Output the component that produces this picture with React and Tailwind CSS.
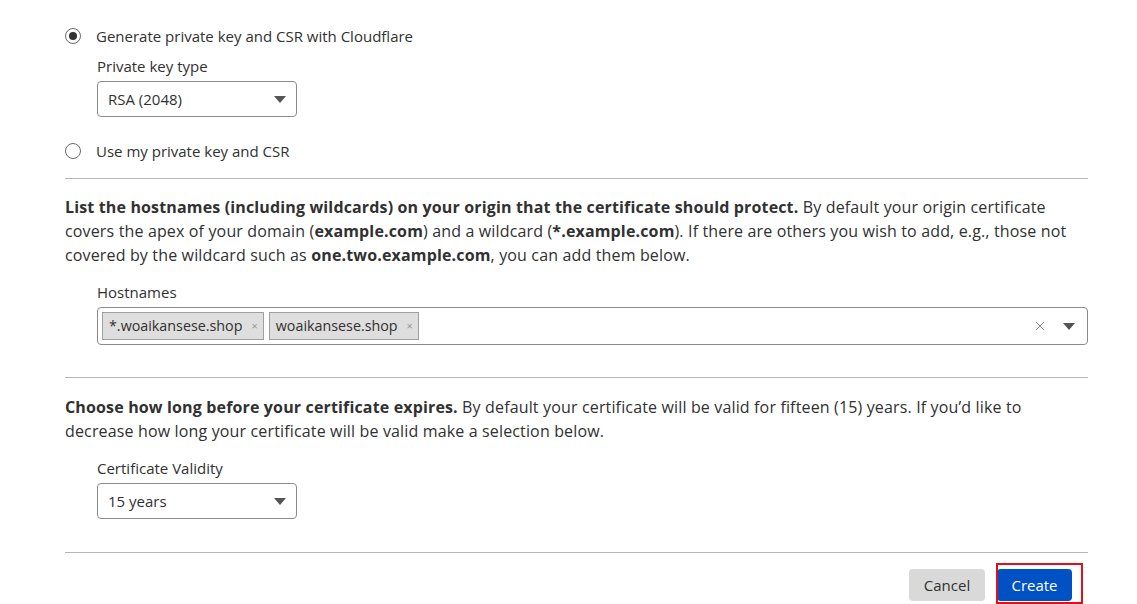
import React from 'react';

const font = { fontFamily: '"Open Sans", "Noto Sans", Arial, sans-serif' };

function Radio({ checked, label }) {
  return (
    <label className="flex items-center gap-[15px] text-[15px] leading-[20px] text-[#313131]">
      <span className="w-[16px] h-[16px] rounded-full border border-[#6b6b6b] bg-white flex items-center justify-center">
        {checked && <span className="w-[8px] h-[8px] rounded-full bg-[#313131]" />}
      </span>
      {label}
    </label>
  );
}

function Select({ value }) {
  return (
    <div className="w-[200px] h-[36px] border border-[#8a8a8a] rounded-[4px] flex items-center justify-between pl-[10px] pr-[10px] text-[15px] text-[#313131]">
      <span>{value}</span>
      <svg width="12" height="7" viewBox="0 0 12 7"><path d="M0 0h12L6 7z" fill="#555" /></svg>
    </div>
  );
}

function Tag({ text }) {
  return (
    <span className="h-[28px] flex items-center gap-[9px] bg-[#dedede] border border-[#a0a0a0] pl-[6px] pr-[5px] text-[14.3px] text-[#313131]">
      {text}
      <span className="text-[11px] text-[#999]">×</span>
    </span>
  );
}

export default function App() {
  return (
    <div style={font} className="bg-white w-[1137px] h-[604px] overflow-hidden pl-[65px] pr-[49px] pt-[26px] text-[#313131]">
      {/* Private key section */}
      <Radio checked label="Generate private key and CSR with Cloudflare" />
      <div className="pl-[32px] mt-[10px]">
        <div className="text-[15px] leading-[20px]">Private key type</div>
        <div className="mt-[5px]"><Select value="RSA (2048)" /></div>
      </div>
      <div className="mt-[24px]"><Radio label="Use my private key and CSR" /></div>

      <div className="border-t border-[#b6b6b6] mt-[17px]" />

      {/* Hostnames */}
      <p className="mt-[16px] text-[16px] leading-[24px] tracking-[0.15px]">
        <b>List the hostnames (including wildcards) on your origin that the certificate should protect.</b> By default your origin certificate covers the apex of your domain (<b>example.com</b>) and a wildcard (<b>*.example.com</b>). If there are others you wish to add, e.g., those not covered by the wildcard such as <b>one.two.example.com</b>, you can add them below.
      </p>
      <div className="pl-[32px] mt-[15px]">
        <div className="text-[15px] leading-[20px]">Hostnames</div>
        <div className="mt-[5px] h-[38px] border border-[#8a8a8a] rounded-[4px] flex items-center pl-[4px] pr-[12px] gap-[5px]">
          <Tag text="*.woaikansese.shop" />
          <Tag text="woaikansese.shop" />
          <div className="flex-1" />
          <svg width="10" height="10" viewBox="0 0 10 10" className="mr-[13px]"><path d="M1 1l8 8M9 1l-8 8" stroke="#888" strokeWidth="1" /></svg>
          <svg width="12" height="7" viewBox="0 0 12 7"><path d="M0 0h12L6 7z" fill="#555" /></svg>
        </div>
      </div>

      <div className="border-t border-[#b6b6b6] mt-[32px]" />

      {/* Validity */}
      <p className="mt-[17px] text-[16px] leading-[24px] tracking-[0.15px]">
        <b>Choose how long before your certificate expires.</b> By default your certificate will be valid for fifteen (15) years. If you’d like to decrease how long your certificate will be valid make a selection below.
      </p>
      <div className="pl-[32px] mt-[15px]">
        <div className="text-[15px] leading-[20px]">Certificate Validity</div>
        <div className="mt-[5px]"><Select value="15 years" /></div>
      </div>

      <div className="border-t border-[#b6b6b6] mt-[33px]" />

      {/* Actions */}
      <div className="flex justify-end items-center gap-[12px] pr-[16px] mt-[16px]">
        <button className="h-[32px] w-[76px] rounded-[4px] bg-[#d9d9d9] text-[15px] text-[#313131]">Cancel</button>
        <div className="relative">
          <button className="h-[32px] w-[75px] rounded-[4px] bg-[#0051c3] text-[15px] text-white">Create</button>
          <div className="absolute left-[-1px] top-[-6px] right-[-11px] bottom-[-3px] border-2 border-[#e0101a]" />
        </div>
      </div>
    </div>
  );
}
